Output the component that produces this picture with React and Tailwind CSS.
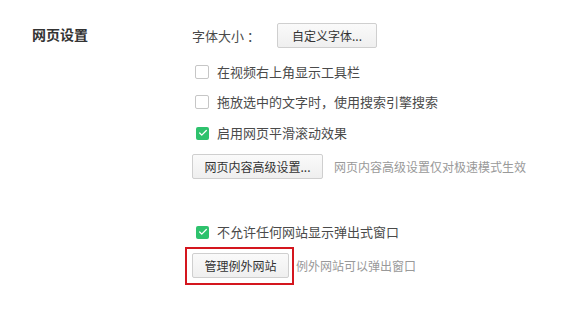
import { Check } from "lucide-react";

const font = { fontFamily: '"Microsoft YaHei", "Noto Sans CJK SC", "Liberation Sans", sans-serif' };

const CheckRow = ({ checked, label, className = "" }) => (
  <label className={`flex h-5 items-center ${className}`}>
    {checked ? (
      <span className="ml-[4px] flex h-[13px] w-[13px] items-center justify-center rounded-[2px] bg-[#2ec26d]">
        <Check size={10} strokeWidth={3} className="text-white" />
      </span>
    ) : (
      <span className="ml-[3px] h-[14px] w-[14px] rounded-[2px] border border-[#c6c6c6] bg-white" />
    )}
    <span className="ml-[8px] text-[13px] text-[#4a4a4a]">{label}</span>
  </label>
);

const Btn = ({ children, className = "" }) => (
  <button
    className={`flex h-[25px] items-center justify-center rounded-[2px] border border-[#cfcfcf] bg-gradient-to-b from-[#fafafa] to-[#efefef] text-[12px] text-[#333] ${className}`}
  >
    {children}
  </button>
);

export default function App() {
  return (
    <div className="flex h-[309px] w-[570px] bg-white pl-[32px] pt-[23px]" style={font}>
      <div className="w-[160px] pt-[1px]">
        <h2 className="text-[14px] font-bold leading-[20px] text-[#333]">网页设置</h2>
      </div>

      <div className="flex flex-col">
        <div className="flex h-[25px] items-center">
          <span className="w-[85px] text-[13px] text-[#4a4a4a]">字体大小 ：</span>
          <Btn className="w-[100px]">自定义字体...</Btn>
        </div>

        <CheckRow className="mt-[14px]" label="在视频右上角显示工具栏" />
        <CheckRow className="mt-[10px]" label="拖放选中的文字时，使用搜索引擎搜索" />
        <CheckRow className="mt-[11px]" checked label="启用网页平滑滚动效果" />

        <div className="mt-[11px] flex items-center">
          <Btn className="w-[131px]">网页内容高级设置...</Btn>
          <span className="ml-[11px] text-[12px] text-[#999]">网页内容高级设置仅对极速模式生效</span>
        </div>

        <CheckRow className="mt-[43px]" checked label="不允许任何网站显示弹出式窗口" />

        <div className="mt-[11px] flex items-center">
          <div className="relative">
            <Btn className="w-[97px]">管理例外网站</Btn>
            <div className="pointer-events-none absolute left-[-7px] top-[-6px] h-[38px] w-[109px] border-2 border-[#d4161e]" />
          </div>
          <span className="ml-[7px] text-[12px] text-[#999]">例外网站可以弹出窗口</span>
        </div>
      </div>
    </div>
  );
}
